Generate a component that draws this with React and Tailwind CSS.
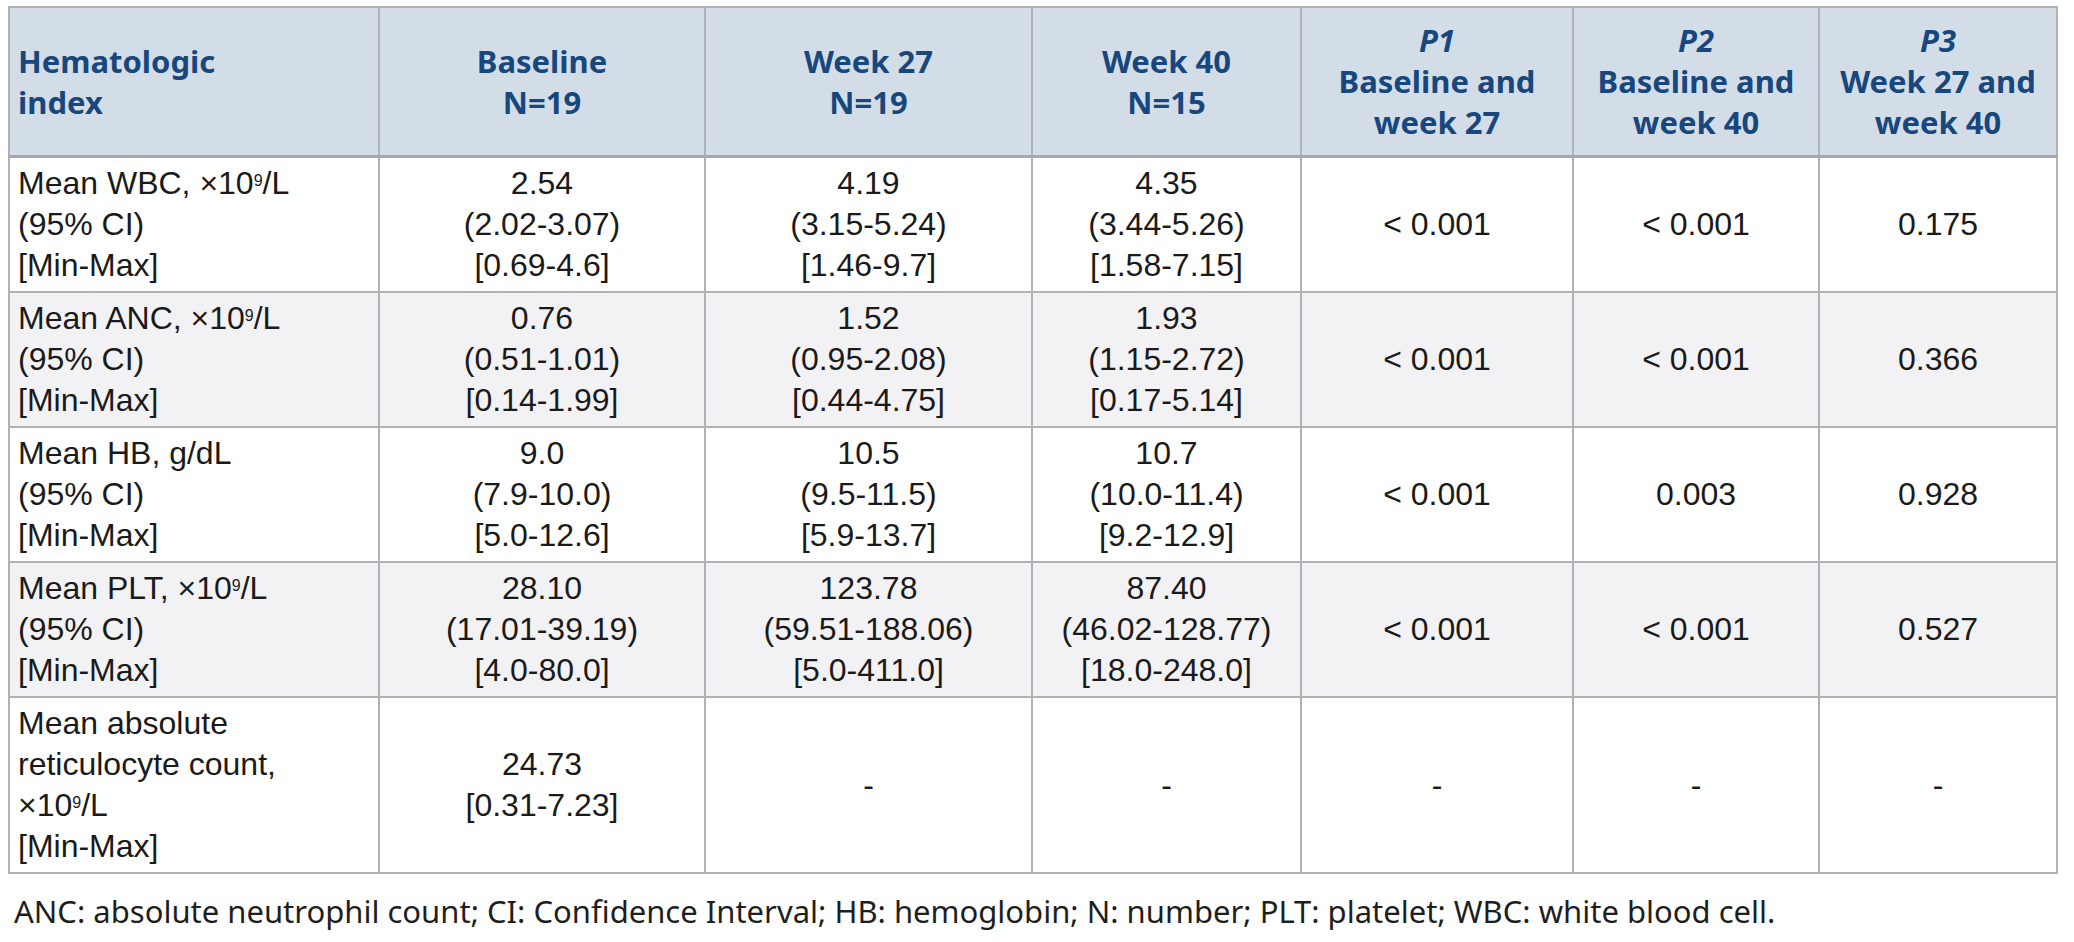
const rows = [
  {
    label: ["Mean WBC, ×10", "9", "/L", "(95% CI)", "[Min-Max]"],
    cells: [
      ["2.54", "(2.02-3.07)", "[0.69-4.6]"],
      ["4.19", "(3.15-5.24)", "[1.46-9.7]"],
      ["4.35", "(3.44-5.26)", "[1.58-7.15]"],
    ],
    p: ["< 0.001", "< 0.001", "0.175"],
  },
  {
    label: ["Mean ANC, ×10", "9", "/L", "(95% CI)", "[Min-Max]"],
    cells: [
      ["0.76", "(0.51-1.01)", "[0.14-1.99]"],
      ["1.52", "(0.95-2.08)", "[0.44-4.75]"],
      ["1.93", "(1.15-2.72)", "[0.17-5.14]"],
    ],
    p: ["< 0.001", "< 0.001", "0.366"],
  },
  {
    label: ["Mean HB, g/dL", null, null, "(95% CI)", "[Min-Max]"],
    cells: [
      ["9.0", "(7.9-10.0)", "[5.0-12.6]"],
      ["10.5", "(9.5-11.5)", "[5.9-13.7]"],
      ["10.7", "(10.0-11.4)", "[9.2-12.9]"],
    ],
    p: ["< 0.001", "0.003", "0.928"],
  },
  {
    label: ["Mean PLT, ×10", "9", "/L", "(95% CI)", "[Min-Max]"],
    cells: [
      ["28.10", "(17.01-39.19)", "[4.0-80.0]"],
      ["123.78", "(59.51-188.06)", "[5.0-411.0]"],
      ["87.40", "(46.02-128.77)", "[18.0-248.0]"],
    ],
    p: ["< 0.001", "< 0.001", "0.527"],
  },
];

const head = "border-2 border-[#b0b2b5] border-b-[3px] border-b-[#a5a7aa] px-[8px] py-[12px] align-middle";
const cell = "border-2 border-[#b0b2b5] px-[8px] py-[5px] align-middle";

function Label({ parts }) {
  const [a, sup, b, l2, l3] = parts;
  return (
    <>
      {a}
      {sup && <sup className="text-[16px]">{sup}</sup>}
      {b}
      <br />
      {l2}
      <br />
      {l3}
    </>
  );
}

export default function App() {
  return (
    <div className="min-h-screen bg-white pl-[8px] pt-[6px]">
      <table
        className="table-fixed border-collapse text-[32px] leading-[41px] text-[#1a1a1a]"
        style={{ width: 2048 }}
      >
        <colgroup>
          <col className="w-[370px]" />
          <col className="w-[326px]" />
          <col className="w-[327px]" />
          <col className="w-[269px]" />
          <col className="w-[272px]" />
          <col className="w-[246px]" />
          <col className="w-[238px]" />
        </colgroup>
        <thead>
          <tr className="bg-[#d3dde7] font-['Noto_Sans',sans-serif] text-[31px] font-bold text-[#17477d]">
            <th className={`${head} text-left`}>
              Hematologic
              <br />
              index
            </th>
            <th className={head}>
              Baseline
              <br />
              N=19
            </th>
            <th className={head}>
              Week 27
              <br />
              N=19
            </th>
            <th className={head}>
              Week 40
              <br />
              N=15
            </th>
            <th className={head}>
              <i>P1</i>
              <br />
              Baseline and
              <br />
              week 27
            </th>
            <th className={head}>
              <i>P2</i>
              <br />
              Baseline and
              <br />
              week 40
            </th>
            <th className={head}>
              <i>P3</i>
              <br />
              Week 27 and
              <br />
              week 40
            </th>
          </tr>
        </thead>
        <tbody className="font-['Liberation_Sans',Arial,sans-serif]">
          {rows.map((r, i) => (
            <tr key={i} className={i % 2 === 1 ? "bg-[#f2f2f4]" : "bg-white"}>
              <td className={`${cell} text-left`}>
                <Label parts={r.label} />
              </td>
              {r.cells.map((c, j) => (
                <td key={j} className={`${cell} text-center`}>
                  {c[0]}
                  <br />
                  {c[1]}
                  <br />
                  {c[2]}
                </td>
              ))}
              {r.p.map((v, j) => (
                <td key={j} className={`${cell} text-center`}>
                  {v}
                </td>
              ))}
            </tr>
          ))}
          <tr className="bg-white">
            <td className={`${cell} text-left`}>
              Mean absolute
              <br />
              reticulocyte count,
              <br />
              ×10<sup className="text-[16px]">9</sup>/L
              <br />
              [Min-Max]
            </td>
            <td className={`${cell} text-center`}>
              24.73
              <br />
              [0.31-7.23]
            </td>
            <td className={`${cell} text-center`}>-</td>
            <td className={`${cell} text-center`}>-</td>
            <td className={`${cell} text-center`}>-</td>
            <td className={`${cell} text-center`}>-</td>
            <td className={`${cell} text-center`}>-</td>
          </tr>
        </tbody>
      </table>
      <p className="mt-[17px] pl-[6px] font-['Noto_Sans',sans-serif] text-[31px] leading-[40px] text-[#1e1e1e]">
        ANC: absolute neutrophil count; CI: Confidence Interval; HB: hemoglobin; N: number; PLT: platelet; WBC: white blood cell.
      </p>
    </div>
  );
}
